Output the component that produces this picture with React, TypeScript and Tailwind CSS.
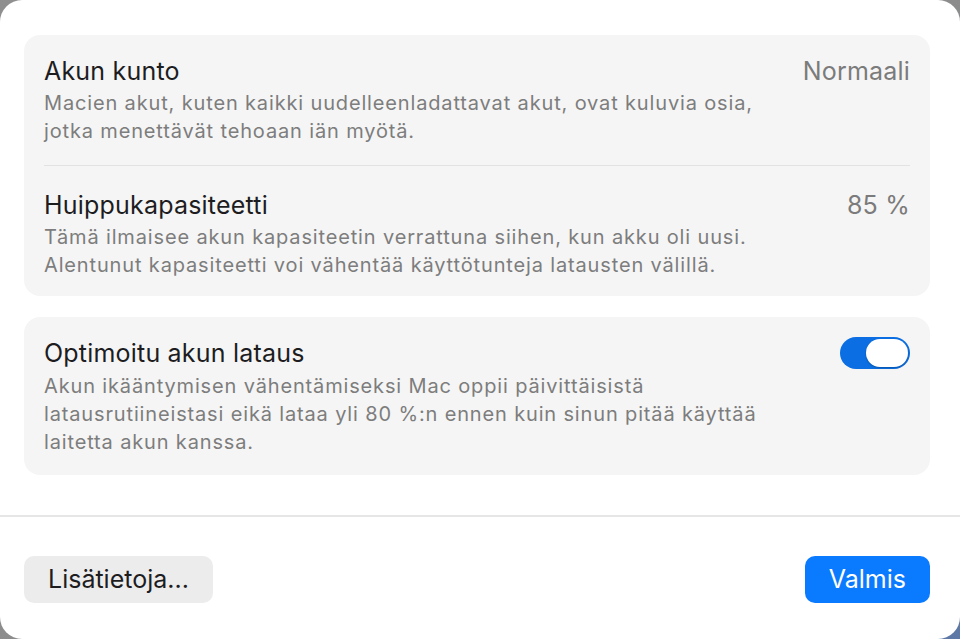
import React, { useState } from 'react';

const font = { fontFamily: 'Inter, "Noto Sans", sans-serif' };

type RowProps = {
  title: string;
  value?: string;
  lines: string[];
};

const InfoRow: React.FC<RowProps> = ({ title, value, lines }) => (
  <div>
    <div className="flex items-center justify-between">
      <h3 className="text-[25px] leading-[28px] tracking-[0.2px] text-[#1d1d1f]">{title}</h3>
      {value && (
        <span className="text-[25px] leading-[28px] tracking-[0.2px] text-[#7b7b7b]">{value}</span>
      )}
    </div>
    <p className="mt-[4px] text-[20px] leading-[28px] tracking-[0.85px] text-[#7d7d7d]">
      {lines.map((l, i) => (
        <span key={i} className="block">
          {l}
        </span>
      ))}
    </p>
  </div>
);

const App: React.FC = () => {
  const [optimized, setOptimized] = useState(true);

  return (
    <div
      className="h-[639px] w-[960px] overflow-hidden bg-gradient-to-br from-[#8f8f8f] via-[#8c8c8c] to-[#5d78a6]"
      style={font}
    >
      <div className="flex h-full flex-col rounded-[22px] bg-white">
        <div className="flex flex-col gap-[21px] pl-[24px] pr-[30px] pt-[35px]">
          {/* Battery health card */}
          <div className="rounded-[16px] bg-[#f5f5f5] px-[20px] pb-[17px] pt-[22px]">
            <div className="pb-[20px]">
              <InfoRow
                title="Akun kunto"
                value="Normaali"
                lines={[
                  'Macien akut, kuten kaikki uudelleenladattavat akut, ovat kuluvia osia,',
                  'jotka menettävät tehoaan iän myötä.',
                ]}
              />
            </div>
            <div className="h-px bg-[#e2e2e2]" />
            <div className="pt-[25px]">
              <InfoRow
                title="Huippukapasiteetti"
                value="85 %"
                lines={[
                  'Tämä ilmaisee akun kapasiteetin verrattuna siihen, kun akku oli uusi.',
                  'Alentunut kapasiteetti voi vähentää käyttötunteja latausten välillä.',
                ]}
              />
            </div>
          </div>

          {/* Optimized charging card */}
          <div className="rounded-[16px] bg-[#f5f5f5] px-[20px] pb-[19px] pt-[20px]">
            <div className="flex items-center justify-between">
              <h3 className="text-[25px] leading-[28px] tracking-[0.2px] text-[#1d1d1f]">
                Optimoitu akun lataus
              </h3>
              <button
                onClick={() => setOptimized((v) => !v)}
                className={`flex h-[32px] w-[70px] items-center rounded-full p-[2px] ${
                  optimized ? 'justify-end bg-[#0b6fe3]' : 'justify-start bg-[#d9d9d9]'
                }`}
              >
                <span className="h-[28px] w-[42px] rounded-full bg-white shadow-[0_1px_2px_rgba(0,0,0,0.25)]" />
              </button>
            </div>
            <p className="mt-[3px] text-[20px] leading-[28px] tracking-[0.85px] text-[#7d7d7d]">
              <span className="block">Akun ikääntymisen vähentämiseksi Mac oppii päivittäisistä</span>
              <span className="block">latausrutiineistasi eikä lataa yli 80 %:n ennen kuin sinun pitää käyttää</span>
              <span className="block">laitetta akun kanssa.</span>
            </p>
          </div>
        </div>

        <div className="mt-[40px] h-[2px] bg-[#e6e6e6]" />

        <div className="flex items-center justify-between pl-[24px] pr-[30px] pt-[39px]">
          <button className="h-[47px] rounded-[10px] bg-[#ececec] px-[24px] text-[25px] text-[#1d1d1f]">
            Lisätietoja...
          </button>
          <button className="h-[47px] rounded-[10px] bg-[#0a7aff] px-[24px] text-[25px] text-white">
            Valmis
          </button>
        </div>
      </div>
    </div>
  );
};

export default App;
